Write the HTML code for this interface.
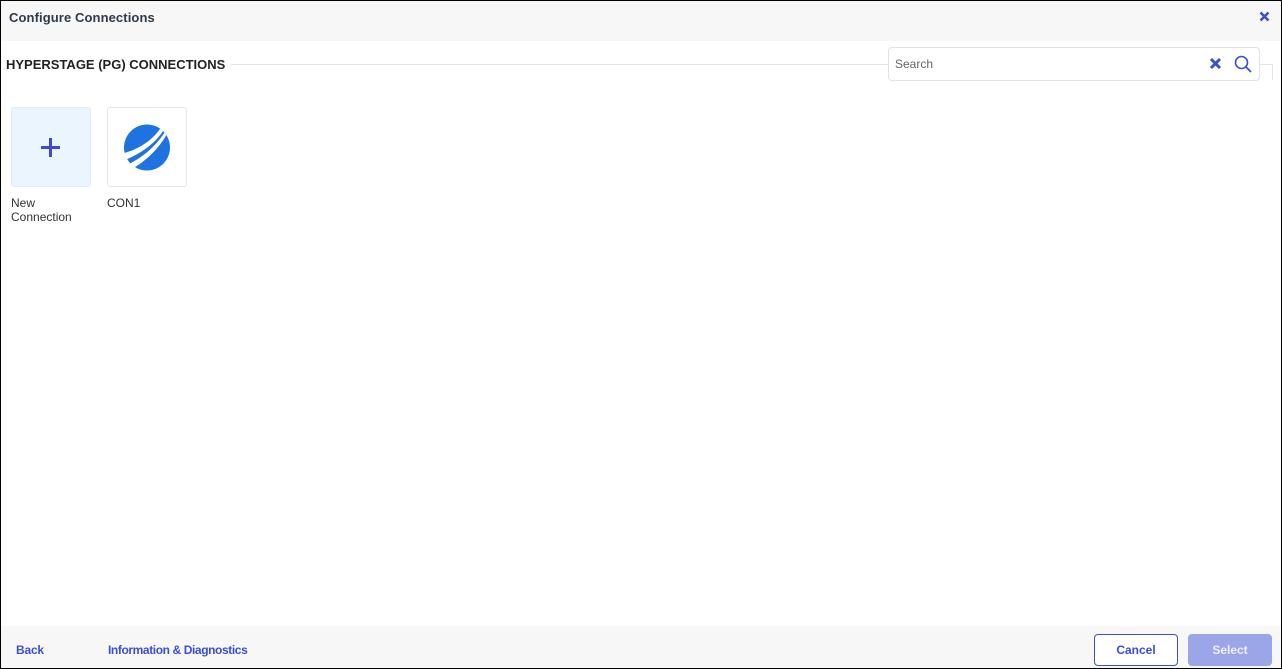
<!DOCTYPE html>
<html><head><style>
*{box-sizing:border-box;margin:0;padding:0}
body{width:1282px;height:669px;position:relative;font-family:"Liberation Sans",sans-serif;background:#fff;overflow:hidden}
.frame{position:absolute;left:0;top:0;width:1282px;height:669px;border:1px solid #000}
.hdr{position:absolute;left:1px;top:1px;width:1280px;height:40px;background:#f7f7f7}
.abs{position:absolute}
</style></head><body>
<div class="hdr"></div>
<div class="abs" style="left:9px;top:10px;font-size:13px;font-weight:bold;color:#2d3a4a;letter-spacing:0.1px">Configure Connections</div>
<svg class="abs" style="left:1259px;top:11px" width="11" height="11" viewBox="0 0 11 11"><path d="M1.5 1.5L9.5 9.5M9.5 1.5L1.5 9.5" stroke="#3a4fd6" stroke-width="2.6"/></svg>
<div class="abs" style="left:6px;top:57px;font-size:13px;font-weight:bold;color:#222">HYPERSTAGE (PG) CONNECTIONS</div>
<div class="abs" style="left:231px;top:64px;width:1042px;height:1px;background:#e4e4e4"></div>
<div class="abs" style="left:1272px;top:64px;width:1px;height:16px;background:#e4e4e4"></div>
<div class="abs" style="left:888px;top:47px;width:372px;height:34px;border:1px solid #e2e2e2;border-radius:4px;background:#fff"></div>
<div class="abs" style="left:895px;top:57px;font-size:12px;color:#666">Search</div>
<svg class="abs" style="left:1209px;top:57px" width="13" height="13" viewBox="0 0 13 13"><path d="M2 2L11 11M11 2L2 11" stroke="#3a4fd6" stroke-width="3"/></svg>
<svg class="abs" style="left:1234px;top:55px" width="18" height="18" viewBox="0 0 18 18"><circle cx="7.5" cy="7.5" r="6" fill="none" stroke="#3a4fd6" stroke-width="1.6"/><path d="M12 12L17 17" stroke="#3a4fd6" stroke-width="1.8"/></svg>
<div class="abs" style="left:11px;top:107px;width:80px;height:80px;background:#eaf5fd;border:1px solid #e3ebf2;border-radius:3px"></div>
<svg class="abs" style="left:40px;top:137px" width="21" height="21" viewBox="0 0 21 21"><path d="M10.5 1V20M1 10.5H20" stroke="#4447d0" stroke-width="3"/></svg>
<div class="abs" style="left:107px;top:107px;width:80px;height:80px;background:#fff;border:1px solid #e6e6e6;border-radius:3px"></div>
<svg class="abs" style="left:124px;top:124px" width="46" height="47" viewBox="0 0 46 47"><defs><clipPath id="c"><circle cx="23" cy="23.5" r="23"/></clipPath></defs><circle cx="23" cy="23.5" r="23" fill="#1f73e0"/><g clip-path="url(#c)"><path d="M0 29C16 25 30 15 38 2L41 4C32 19 18 29 1 36Z" fill="#fff"/><path d="M3 41C20 33 34 20 42 6L44 8C37 22 23 37 6 46Z" fill="#fff"/></g></svg>
<div class="abs" style="left:11px;top:196px;font-size:12px;color:#333;line-height:14px">New<br>Connection</div>
<div class="abs" style="left:107px;top:196px;font-size:12px;color:#333">CON1</div>
<div class="abs" style="left:1px;top:626px;width:1280px;height:42px;background:#f7f7f7"></div>
<div class="abs" style="left:16px;top:643px;font-size:12px;font-weight:bold;color:#3a4fd6;letter-spacing:-0.2px">Back</div>
<div class="abs" style="left:108px;top:643px;font-size:12px;font-weight:bold;color:#3a4fd6;letter-spacing:-0.4px">Information &amp; Diagnostics</div>
<div class="abs" style="left:1094px;top:634px;width:84px;height:32px;border:1px solid #3a4fd6;border-radius:4px;background:#fff;color:#3a4fd6;font-size:12px;font-weight:bold;text-align:center;line-height:30px">Cancel</div>
<div class="abs" style="left:1188px;top:634px;width:84px;height:32px;border-radius:4px;background:#9aa6e8;color:#eef;font-size:12px;font-weight:bold;text-align:center;line-height:32px">Select</div>
<div class="frame"></div>
</body></html>
